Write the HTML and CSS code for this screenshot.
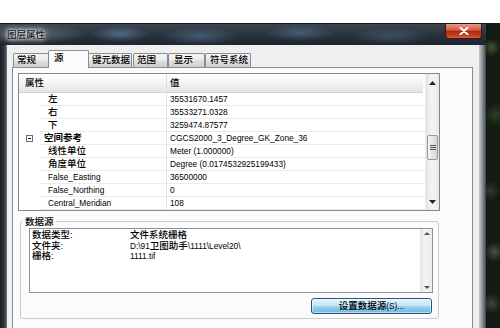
FILE: index.html
```html
<!DOCTYPE html>
<html>
<head>
<meta charset="utf-8">
<title>图层属性</title>
<link rel="stylesheet" href="styles.css">
</head>
<body>
<div class="top"></div>
<div class="screen">
  <div class="window">
    <div class="titlebar">
      <span class="title">图层属性</span>
      <span class="close"><svg width="10" height="8" viewBox="0 0 10 8"><path d="M1.5 0.8 L8.5 7.2 M8.5 0.8 L1.5 7.2" stroke="#fff" stroke-width="2" stroke-linecap="round"/></svg></span>
    </div>
    <div class="frame">
      <div class="edge-left"></div>
      <div class="client">
        <div class="tabs">
          <div class="tab t1">常规</div>
          <div class="tab t2 active">源</div>
          <div class="tab t3">键元数据</div>
          <div class="tab t4">范围</div>
          <div class="tab t5">显示</div>
          <div class="tab t6">符号系统</div>
        </div>
        <div class="panel">
          <div class="grid">
            <div class="grid-main">
              <div class="gh gh1">属性</div>
              <div class="gh gh2">值</div>

              <div class="g"></div><div class="l">左</div><div class="v">35531670.1457</div>
              <div class="g"></div><div class="l">右</div><div class="v">35533271.0328</div>
              <div class="g"></div><div class="l">下</div><div class="v">3259474.87577</div>
              <div class="g"><svg class="expander" width="7" height="7" viewBox="0 0 7 7"><rect x="0.5" y="0.5" width="6" height="6" fill="#fff" stroke="#6d6d6d"/><path d="M2 3.5 H5" stroke="#111"/></svg></div><div class="l cat">空间参考</div><div class="v">CGCS2000_3_Degree_GK_Zone_36</div>
              <div class="g"></div><div class="l">线性单位</div><div class="v">Meter (1.000000)</div>
              <div class="g"></div><div class="l">角度单位</div><div class="v">Degree (0.0174532925199433)</div>
              <div class="g"></div><div class="l num">False_Easting</div><div class="v">36500000</div>
              <div class="g"></div><div class="l num">False_Northing</div><div class="v">0</div>
              <div class="g"></div><div class="l num">Central_Meridian</div><div class="v">108</div>
            </div>
            <div class="vscroll">
              <div class="sb-btn"><svg width="7" height="4" viewBox="0 0 7 4"><path d="M0 4 L3.5 0 L7 4Z" fill="#222"/></svg></div>
              <div class="sb-track">
                <div class="thumb"><svg width="6" height="6" viewBox="0 0 6 6"><path d="M0 0.5H6M0 2.5H6M0 4.5H6" stroke="#555"/></svg></div>
              </div>
              <div class="sb-btn"><svg width="7" height="4" viewBox="0 0 7 4"><path d="M0 0 L3.5 4 L7 0Z" fill="#222"/></svg></div>
            </div>
          </div>

          <fieldset class="group">
            <legend>数据源</legend>
            <div class="group-body">
              <div class="textbox">
                <div class="tb-text">
                  <div class="line"><span class="k">数据类型:</span><span class="val">文件系统栅格</span></div>
                  <div class="line"><span class="k">文件夹:</span><span class="val num">D:\91<span class="cj">卫图助手</span>\1111\Level20\</span></div>
                  <div class="line"><span class="k">栅格:</span><span class="val num">1111.tif</span></div>
                </div>
                <div class="vscroll small">
                  <div class="sb-btn sm"><svg width="6" height="3" viewBox="0 0 6 3"><path d="M0 3 L3 0 L6 3Z" fill="#555"/></svg></div>
                  <div class="sb-track"></div>
                  <div class="sb-btn sm"><svg width="6" height="3" viewBox="0 0 6 3"><path d="M0 0 L3 3 L6 0Z" fill="#555"/></svg></div>
                </div>
              </div>
              <div class="btnrow">
                <button class="btn">设置数据源<span class="num">(S)...</span></button>
              </div>
            </div>
          </fieldset>
        </div>
      </div>
      <div class="edge-right"></div>
    </div>
  </div>
  <div class="desktop"></div>
</div>
</body>
</html>
```
FILE: styles.css
```css
* { box-sizing: border-box; }
html, body { margin: 0; padding: 0; }
body {
  width: 500px;
  height: 328px;
  overflow: hidden;
  background: #fff;
  font-family: "Liberation Sans", "Noto Sans CJK SC", sans-serif;
  font-size: 9.5px;
  font-weight: 500;
  color: #000;
}
.num { font-size: 8.3px; }
.cj { font-size: 9.5px; }

.top { height: 23px; }
.screen { display: flex; height: 305px; }
.window { width: 486px; display: flex; flex-direction: column; }

.titlebar {
  flex: none;
  height: 22px;
  display: flex;
  align-items: flex-start;
  border-top: 1px solid #15181b;
  background:
    radial-gradient(ellipse 30px 8px at 120px 10px, rgba(110,150,190,.55), transparent),
    radial-gradient(ellipse 40px 9px at 200px 12px, rgba(90,130,170,.5), transparent),
    radial-gradient(ellipse 35px 8px at 300px 9px, rgba(100,140,175,.45), transparent),
    radial-gradient(ellipse 40px 9px at 390px 12px, rgba(90,120,150,.4), transparent),
    radial-gradient(ellipse 60px 10px at 30px 10px, rgba(160,170,180,.45), transparent),
    linear-gradient(#3d4650, #26303a 60%, #1e2630);
}
.title {
  margin: 5px 0 0 7px;
  line-height: 11px;
  color: #151515;
  text-shadow: 0 0 3px #fff, 0 0 5px rgba(255,255,255,.9), 0 0 8px rgba(255,255,255,.6);
}
.close {
  flex: none;
  margin-left: auto;
  margin-right: 4px;
  width: 37px;
  height: 15px;
  display: flex;
  align-items: center;
  justify-content: center;
  border: 1px solid #4a140c;
  border-top: none;
  border-radius: 0 0 4px 4px;
  background: linear-gradient(#e49a86, #cf5a40 45%, #b02a12 52%, #c2401f 85%, #d66a48);
}

.frame { flex: 1; min-height: 0; display: flex; overflow: hidden; }
.edge-left { width: 7px; background: linear-gradient(90deg, #1b1e22, #2f353b 60%, #5a6168 90%, #9aa0a6); }
.edge-right { width: 7px; background: linear-gradient(90deg, #c9cdd1, #9aa0a6 35%, #5e646a 80%, #3a3f44); }
.client {
  width: 472px;
  background: #efefef;
  padding-top: 5px;
  display: flex;
  flex-direction: column;
  overflow: hidden;
}
.desktop {
  flex: 1;
  background:
    radial-gradient(circle at 40% 8%, rgba(70,100,50,.8), transparent 9px),
    radial-gradient(circle at 70% 30%, rgba(40,70,35,.9), transparent 12px),
    radial-gradient(circle at 30% 55%, rgba(55,75,45,.7), transparent 10px),
    radial-gradient(circle at 60% 75%, rgba(110,115,110,.6), transparent 10px),
    radial-gradient(circle at 40% 92%, rgba(90,95,90,.6), transparent 10px),
    #151a14;
}

/* tabs */
.tabs {
  flex: none;
  display: flex;
  align-items: flex-end;
  height: 17px;
  padding-left: 6px;
  position: relative;
  z-index: 1;
}
.tab {
  height: 14px;
  border: 1px solid #898c95;
  border-bottom: none;
  border-radius: 2px 2px 0 0;
  background: linear-gradient(#f4f4f4, #ebebeb 48%, #dedede 52%, #d0d0d0);
  line-height: 12px;
  padding-left: 3px;
  margin-right: -1px;
  white-space: nowrap;
}
.tab.active {
  height: 18px;
  margin-bottom: -1px;
  background: #fbfbfb;
  padding: 1px 0 0 5px;
}
.t1 { width: 36px; }
.t2 { width: 41px; }
.t3 { width: 44px; }
.t4 { width: 35px; margin-left: 2px; }
.t5 { width: 37px; margin-left: 1px; padding-left: 5px; }
.t6 { width: 46px; margin-left: 1px; padding-left: 4px; }

.panel {
  flex: none;
  margin-left: 5px;
  width: 461px;
  height: 270px;
  border: 1px solid #898c95;
  background: #fbfbfb;
  padding: 5px 0 0 5px;
}

/* property grid */
.grid {
  width: 422px;
  height: 138px;
  border: 1px solid #828790;
  background: #fff;
  display: flex;
}
.grid-main {
  flex: 1;
  display: grid;
  grid-template-columns: 21px 127px 1fr;
  grid-template-rows: 19px repeat(9, 13px);
  align-content: start;
}
.gh {
  background: linear-gradient(#ffffff, #f3f3f3 50%, #e4e5e6);
  border-bottom: 1px solid #d0d2d4;
  line-height: 18px;
  white-space: nowrap;
}
.gh1 { grid-column: 1 / 3; padding-left: 6px; border-right: 1px solid #dedede; }
.gh2 { padding-left: 3px; margin-right: 2px; }
.g { display: flex; align-items: center; padding-left: 7px; }
.expander { display: block; }
.l, .v {
  border-bottom: 1px solid #ebebeb;
  line-height: 12px;
  white-space: nowrap;
  overflow: hidden;
}
.l { padding-left: 8px; border-right: 1px solid #e4e4e4; }
.l.cat { padding-left: 4px; font-weight: bold; }
.v { padding-left: 3px; font-size: 8.3px; }

.vscroll {
  width: 14px;
  display: flex;
  flex-direction: column;
  background: linear-gradient(90deg, #e2e2e2, #f1f1f1 30%, #f1f1f1 70%, #e6e6e6);
  border-left: 1px solid #ececec;
}
.sb-btn {
  height: 17px;
  display: flex;
  align-items: center;
  justify-content: center;
}
.sb-track { flex: 1; padding: 44px 1px 0 1px; }
.thumb {
  height: 25px;
  border: 1px solid #979797;
  border-radius: 2px;
  background: linear-gradient(90deg, #f5f5f5, #e4e4e4 50%, #d6d6d6);
  display: flex;
  align-items: center;
  justify-content: center;
}

/* group box */
.group {
  margin: 5px 0 0 2px;
  padding: 0;
  width: 419px;
  min-width: 0;
  border: 1px solid #c9cccf;
  border-radius: 3px;
}
.group legend {
  margin-left: 2px;
  padding: 0 2px;
  line-height: 11px;
}
.group-body { padding: 1px 5px 4px 8px; }
.textbox {
  width: 404px;
  height: 65px;
  border: 1px solid #8c8f94;
  background: #fff;
  display: flex;
}
.tb-text { flex: 1; padding: 1px 0 0 2px; }
.line { display: flex; height: 10.5px; line-height: 10.5px; white-space: nowrap; }
.k { width: 98px; }
.vscroll.small {
  width: 12px;
  border-left: 1px solid #e4e4e4;
  background: linear-gradient(90deg, #e8e8e8, #f4f4f4 40%, #ececec);
}
.sb-btn.sm { height: 12px; }

.btnrow { display: flex; justify-content: flex-end; margin-top: 5px; padding-right: 1px; }
.btn {
  width: 121px;
  height: 16px;
  padding: 0;
  border: 1px solid #2a5577;
  border-radius: 3px;
  background: linear-gradient(#e6f5fc, #c2e4f6 48%, #9ed4f0 52%, #6fb6de);
  box-shadow: inset 0 0 0 1px rgba(255,255,255,.5);
  font-family: "Liberation Sans", "Noto Sans CJK SC", sans-serif;
  font-size: 9.5px;
  font-weight: 500;
  line-height: 13px;
  color: #000;
}
```
